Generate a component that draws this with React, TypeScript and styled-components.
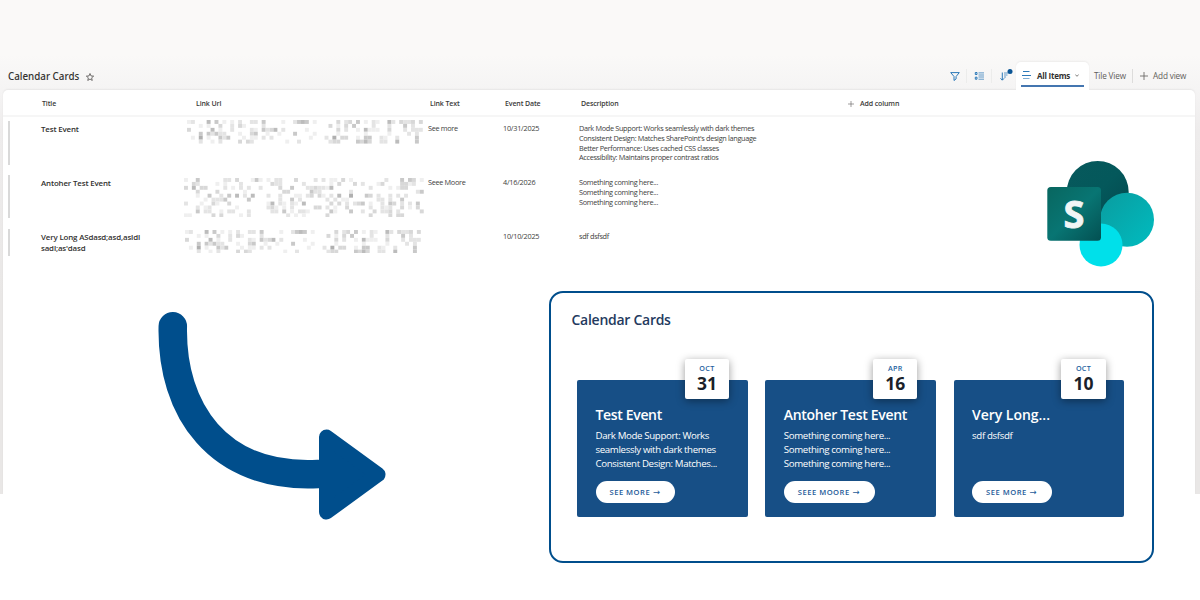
import React from "react";
import styled, { createGlobalStyle } from "styled-components";

const GlobalStyle = createGlobalStyle`
  body { margin: 0; background: #fff; font-family: "Open Sans", "Noto Sans", sans-serif; }
  *, *::before, *::after { box-sizing: border-box; }
`;

const Page = styled.main`
  position: relative;
  width: 1200px;
  height: 600px;
  overflow: hidden;
  background: #fff;
`;

const ListSite = styled.section`
  display: flex;
  flex-direction: column;
  height: 494px;
  padding: 62px 5px 0 3px;
  background: linear-gradient(#faf9f8 0, #faf9f8 55px, #f5f4f4 90px, #eeecec 130px, #e9e7e6 300px, #e9e7e6 100%);
`;

const CommandBar = styled.header`
  display: flex;
  align-items: center;
  height: 28px;
  padding-left: 5px;
  flex: none;
`;

const ListTitle = styled.h1`
  margin: 1px 0 0;
  font-family: "Noto Sans", sans-serif;
  font-size: 9.8px;
  line-height: 14px;
  font-weight: 500;
  color: #323130;
  letter-spacing: 0;
`;

const Star = styled.svg`
  width: 8px;
  height: 8px;
  margin: 2px auto 0 7px;
`;

const Tool = styled.span<{ $last?: boolean }>`
  display: flex;
  align-items: center;
  justify-content: center;
  width: 24.5px;
  height: 14px;
  padding-left: ${(p) => (p.$last ? 5 : 1)}px;
  border-right: 1px solid ${(p) => (p.$last ? "transparent" : "#ececeb")};
  svg { display: block; overflow: visible; flex: none; }
`;

const ActiveTab = styled.div`
  display: flex;
  align-items: center;
  position: relative;
  width: 73px;
  height: 28px;
  padding: 0 10px 2px 6px;
  border-radius: 5px 5px 0 0;
  background: #fff;
  box-shadow: 0 -1px 2px rgba(0, 0, 0, 0.05);
  &::after {
    content: "";
    position: absolute;
    left: 5px;
    right: 5px;
    bottom: 3px;
    height: 2px;
    background: #4476b0;
  }
`;

const TabLabel = styled.span`
  margin: 1px 0 0 6px;
  font-size: 8px;
  line-height: 12px;
  font-weight: 700;
  color: #323130;
  letter-spacing: -0.24px;
  flex: 1;
  white-space: nowrap;
`;

const ViewLink = styled.span<{ $left: number; $width: number }>`
  display: flex;
  align-items: center;
  gap: 5px;
  height: 14px;
  margin-bottom: 2px;
  padding-left: ${(p) => p.$left}px;
  width: ${(p) => p.$width}px;
  font-size: 8.2px;
  color: #5f5d5b;
  letter-spacing: -0.15px;
  white-space: nowrap;
  svg { margin-top: 2px; }
`;

const Divider = styled.i`
  width: 1px;
  height: 14px;
  background: #dddcdb;
`;

const ListSurface = styled.div`
  flex: 1;
  background: #fff;
  border-radius: 5px 5px 0 0;
  box-shadow: 0 -1px 2px rgba(0, 0, 0, 0.06);
`;

const HeadRow = styled.div`
  display: grid;
  grid-template-columns: 154px 234px 75px 76px 267px 1fr;
  align-items: center;
  height: 27px;
  padding: 2px 0 0 39px;
  border-bottom: 2px solid #f6f6f6;
  font-size: 7px;
  font-weight: 600;
  color: #3b3a39;
  letter-spacing: -0.12px;
`;

const AddColumn = styled.span`
  display: flex;
  align-items: center;
  gap: 6px;
`;

const Row = styled.div<{ $height: number; $bar: number }>`
  display: grid;
  grid-template-columns: 33px 143px 244px 75px 76px 1fr;
  height: ${(p) => p.$height}px;
  padding: 4px 0 0 5px;
  font-size: 7.3px;
  line-height: 9.6px;
  color: #403e3c;
  letter-spacing: -0.32px;
  &::before {
    content: "";
    width: 2px;
    height: ${(p) => p.$bar}px;
    background: #d9d9d9;
  }
`;

const RowTitle = styled.strong`
  padding-top: 3px;
  width: 112px;
  font-size: 7.9px;
  line-height: 11px;
  font-weight: 600;
  color: #323130;
  letter-spacing: -0.15px;
`;

const Cell = styled.span`
  padding-top: 3.4px;
  white-space: pre-line;
`;

const DateCell = styled(Cell)`
  letter-spacing: -0.25px;
`;

const Mosaic = styled.svg<{ $left: number; $top: number }>`
  display: block;
  margin: ${(p) => p.$top}px 0 0 ${(p) => p.$left}px;
`;

const Panel = styled.section`
  position: absolute;
  left: 549px;
  top: 291px;
  width: 605px;
  height: 272px;
  padding: 17px 20px 0 20.5px;
  border: 2px solid #004e8c;
  border-radius: 14px;
  background: #fff;
`;

const PanelTitle = styled.h2`
  margin: 0 0 49.5px;
  font-size: 14px;
  line-height: 20px;
  font-weight: 600;
  color: #243a5e;
  letter-spacing: -0.27px;
`;

const CardGrid = styled.div`
  display: grid;
  grid-template-columns: repeat(3, 170.7px);
  gap: 17.6px;
  padding-left: 5.5px;
`;

const Card = styled.article`
  position: relative;
  display: flex;
  flex-direction: column;
  align-items: flex-start;
  height: 137.5px;
  padding: 25px 18px 14px 18.5px;
  border-radius: 2px;
  background: #174f86;
  color: #fff;
`;

const DateBadge = styled.time`
  position: absolute;
  right: 18.5px;
  top: -20.5px;
  display: flex;
  flex-direction: column;
  align-items: center;
  width: 44.5px;
  height: 40px;
  padding-top: 5px;
  border-radius: 2px;
  background: #fff;
  box-shadow: 0 2px 9px rgba(0, 0, 0, 0.4);
`;

const Month = styled.span`
  font-size: 7.2px;
  line-height: 9px;
  font-weight: 600;
  color: #1e5fa0;
  letter-spacing: 0.3px;
`;

const Day = styled.span`
  font-size: 17.5px;
  line-height: 20px;
  font-weight: 700;
  color: #1b1f2a;
`;

const CardTitle = styled.h3<{ $tracking: number }>`
  margin: 0 0 4px;
  font-size: 14px;
  line-height: 20px;
  font-weight: 600;
  letter-spacing: ${(p) => p.$tracking}px;
  white-space: nowrap;
`;

const CardText = styled.p`
  margin: 0;
  font-size: 9.7px;
  line-height: 14px;
  letter-spacing: -0.36px;
  white-space: pre;
`;

const CardButton = styled.a`
  display: flex;
  align-items: center;
  gap: 2.5px;
  height: 22px;
  margin-top: auto;
  padding: 0 14.5px 0 14px;
  border-radius: 11px;
  background: #fff;
  color: #1e5b99;
  font-size: 7.6px;
  font-weight: 600;
  letter-spacing: 0.5px;
  white-space: nowrap;
`;

const ButtonArrow = styled.span`
  width: 8px;
  font-family: "DejaVu Sans", sans-serif;
  font-size: 8.5px;
  font-weight: 400;
  line-height: 10px;
  letter-spacing: 0;
`;

const Arrow = styled.svg`
  position: absolute;
  left: 150px;
  top: 305px;
`;

const Logo = styled.svg`
  position: absolute;
  left: 1040px;
  top: 155px;
`;

const narrowLink = [
  "0:1 1:2 5:5 7:4 9:1 11:1 13:2 16:2 17:2 19:4 24:1 27:2 28:4 29:5 30:4 32:1 38:3 40:2 41:3 43:4 45:1 47:2 48:1 51:5 52:2 54:3 55:2 56:2 57:3 59:3",
  "3:1 5:1 8:3 11:2 13:3 14:1 19:2 36:3 38:1 40:3 42:4 47:2 51:2 55:4 57:2",
  "0:3 6:5 8:1 11:2 16:2 17:1 19:4 20:2 21:3 22:5 24:2 30:1 38:3 40:2 43:1 45:5 46:1 47:1 48:1 51:3 55:2 57:2 58:2 59:2",
  "3:4 5:4 6:2 7:4 8:2 9:2 13:1 16:3 17:4 20:1 23:1 27:4 32:1 38:1 45:1 51:1 56:2 58:2",
  "1:1 3:6 5:1 8:4 9:2 10:4 14:1 16:1 17:1 19:2 21:2 31:1 35:2 37:6 39:3 40:3 43:1 45:4 46:4 49:2 50:1 53:2 58:4",
  "3:2 6:1 8:2 13:3 15:3 16:2 25:1 28:2 36:2 37:3 38:3 43:4 44:3 45:5 46:3 49:2 50:2 53:5 58:4",
];

const wideLink = [
  "0:1 3:4 10:2 11:2 13:3 17:1 18:4 19:1 21:1 23:2 24:2 28:3 33:2 35:2 37:1 38:1 40:3 42:1 51:2 55:4 57:4 58:3 60:1",
  "2:3 3:2 8:1 10:1 14:2 22:3 23:2 24:2 30:2 37:1 39:3 43:3 45:2 49:1 50:3 55:3 56:3 57:1 58:2",
  "0:3 2:5 4:3 5:3 10:2 12:1 14:2 16:2 19:2 24:3 27:4 31:2 32:2 33:3 34:2 35:2 36:1 37:5 47:2 52:1 54:1 55:3 56:3",
  "3:3 8:3 15:1 25:3 26:3 32:4 33:2 34:2 42:2 59:2 60:4",
  "3:1 6:4 9:2 11:4 13:5 15:2 17:5 21:2 24:2 28:1 29:1 31:2 32:3 34:3 35:1 37:2 39:5 42:6 46:4 47:3 49:2 52:2 54:2 56:2",
  "5:1 7:2 8:2 9:2 10:4 16:4 24:2 27:4 29:2 36:2 38:2 40:1 41:1 49:2 50:2 52:2 55:4",
  "0:2 4:1 7:3 8:1 11:3 21:1 22:5 24:2 25:1 27:2 28:1 30:5 37:3 39:3 41:2 43:2 44:3 45:4 47:1 50:2 52:4 53:3 55:2 57:2 59:4",
  "3:2 5:1 6:2 13:1 21:2 22:3 23:1 25:1 27:2 33:3 34:3 36:2 38:1 41:3 47:2 50:2 51:1 52:2 55:3 57:1 59:3",
  "3:4 5:2 6:2 9:1 11:2 12:2 16:2 22:2 23:2 25:4 27:1 29:2 30:2 31:1 37:4 38:1 42:4 45:2 48:3 50:2 51:2 52:3 54:2 60:3",
  "0:1 1:1 7:3 9:3 14:1 16:2 26:2 28:1 30:1 36:3 47:3 52:3 54:3 55:3",
];

const shades = ["#fff", "#efefef", "#e4e4e4", "#d8d8d8", "#c9c9c9", "#bcbcbc", "#b0b0b0"];
const CELL = 3.93;

function RedactedLink({ rows, left, top }: { rows: string[]; left: number; top: number }) {
  return (
    <Mosaic $left={left} $top={top} width={241} height={rows.length * CELL} aria-label="hidden link">
      {rows.flatMap((row, y) =>
        row.split(" ").map((entry) => {
          const [x, level] = entry.split(":").map(Number);
          return <rect key={`${x}-${y}`} x={x * CELL} y={y * CELL} width={CELL} height={CELL} fill={shades[level]} />;
        })
      )}
    </Mosaic>
  );
}

const items = [
  {
    title: "Test Event", link: narrowLink, left: 3, top: -1, text: "See more", date: "10/31/2025", height: 54, bar: 44,
    description: "Dark Mode Support: Works seamlessly with dark themes\nConsistent Design: Matches SharePoint's design language\nBetter Performance: Uses cached CSS classes\nAccessibility: Maintains proper contrast ratios",
  },
  {
    title: "Antoher Test Event", link: wideLink, left: 0, top: 3, text: "Seee Moore", date: "4/16/2026", height: 54, bar: 43,
    description: "Something coming here...\nSomething coming here...\nSomething coming here...",
  },
  {
    title: "Very Long ASdasd;asd,asldl sadl;as'dasd", link: narrowLink, left: 1, top: 0.7, text: "", date: "10/10/2025", height: 54, bar: 27,
    description: "sdf dsfsdf",
  },
];

const cards = [
  { month: "OCT", day: 31, title: "Test Event", tracking: -0.34, text: "Dark Mode Support: Works\nseamlessly with dark themes\nConsistent Design: Matches...", action: "SEE MORE" },
  { month: "APR", day: 16, title: "Antoher Test Event", tracking: -0.3, text: "Something coming here...\nSomething coming here...\nSomething coming here...", action: "SEEE MOORE" },
  { month: "OCT", day: 10, title: "Very Long...", tracking: -0.03, text: "sdf dsfsdf", action: "SEE MORE" },
];

const Plus = ({ size }: { size: number }) => (
  <svg width={size} height={size} viewBox="0 0 8 8" stroke="#5f5d5b" strokeWidth="0.8">
    <path d="M4 0v8M0 4h8" />
  </svg>
);

export default function App() {
  return (
    <Page>
      <GlobalStyle />
      <ListSite>
        <CommandBar>
          <ListTitle>Calendar Cards</ListTitle>
          <Star viewBox="0 0 16 16" fill="none" stroke="#484644" strokeWidth="1.5" strokeLinejoin="round">
            <path d="M8 1l2 4.900 5.300.400-4 3.400 1.200 5.200L8 12.100l-4.500 2.800 1.200-5.200-4-3.400 5.300-.4z" />
          </Star>
          <Tool>
            <svg width="10" height="9" viewBox="0 0 10 9" fill="none" stroke="#2b78b8" strokeWidth="1" strokeLinejoin="round">
              <path d="M.7.6h8.600L6.100 4.500v2.400L4 8.500v-4z" />
            </svg>
          </Tool>
          <Tool>
            <svg width="9" height="8" viewBox="0 0 9 8" fill="none" stroke="#2b78b8" strokeWidth="1">
              <path d="M3.500 .9H9M3.500 3H9M3.500 5H9M3.500 7.200H9" opacity=".75" />
              <path d="M.3.500h1.700v2H.300zM.300 5.200h1.700v2H.300z" />
            </svg>
          </Tool>
          <Tool $last>
            <svg width="12" height="10" viewBox="0 0 12 10" fill="none" stroke="#2b78b8" strokeWidth="1">
              <path d="M2.300 1.500v7.500M.500 7.300l1.800 1.900 1.800-1.900" />
              <path d="M4 2h4M4 4h3.500M4 6h2" opacity=".75" />
              <circle cx="10" cy="0.500" r="2.500" fill="#0b5595" stroke="none" />
            </svg>
          </Tool>
          <ActiveTab>
            <svg width="9" height="9" viewBox="0 0 9 9" fill="none" stroke="#2b78b8" strokeWidth="1">
              <path d="M1 .5h6.500M0 4.500h9" />
              <path d="M1 7.500h6.500" opacity=".6" />
            </svg>
            <TabLabel>All Items</TabLabel>
            <svg width="4" height="3" viewBox="0 0 4 3" fill="none" stroke="#605e5c" strokeWidth=".8">
              <path d="M.3.5L2 2.300 3.700.500" />
            </svg>
          </ActiveTab>
          <ViewLink $left={5} $width={43}>Tile View</ViewLink>
          <Divider />
          <ViewLink $left={7} $width={62}><Plus size={8} />Add view</ViewLink>
        </CommandBar>
        <ListSurface>
          <HeadRow>
            <span>Title</span>
            <span>Link Url</span>
            <span>Link Text</span>
            <span>Event Date</span>
            <span>Description</span>
            <AddColumn><Plus size={6} />Add column</AddColumn>
          </HeadRow>
          {items.map((item) => (
            <Row key={item.title} $height={item.height} $bar={item.bar}>
              <RowTitle>{item.title}</RowTitle>
              <RedactedLink rows={item.link} left={item.left} top={item.top} />
              <Cell>{item.text}</Cell>
              <DateCell>{item.date}</DateCell>
              <Cell>{item.description}</Cell>
            </Row>
          ))}
        </ListSurface>
      </ListSite>

      <Logo width="120" height="116" viewBox="0 0 120 116">
        <defs>
          <linearGradient id="dark" x1="0" y1="0" x2="1" y2="1">
            <stop offset="0" stopColor="#07595c" />
            <stop offset=".5" stopColor="#04585b" />
            <stop offset="1" stopColor="#03484d" />
          </linearGradient>
          <linearGradient id="mid" x1="0" y1="0" x2="1" y2="1">
            <stop offset="0" stopColor="#0a9c9f" />
            <stop offset="1" stopColor="#00bcc0" />
          </linearGradient>
          <linearGradient id="tile" x1="0" y1="0" x2="1" y2="1">
            <stop offset="0" stopColor="#08665f" />
            <stop offset=".5" stopColor="#087573" />
            <stop offset="1" stopColor="#035052" />
          </linearGradient>
        </defs>
        <circle cx="57.700" cy="37" r="31" fill="url(#dark)" />
        <circle cx="87" cy="64.700" r="27" fill="url(#mid)" />
        <circle cx="61" cy="90" r="21.500" fill="#00e0ea" />
        <rect x="7.300" y="32" width="53.700" height="53.700" rx="3.500" fill="url(#tile)" />
        <text x="34" y="72.500" textAnchor="middle" fontFamily="Open Sans" fontWeight="700" fontSize="38" fill="#f1f6f6" stroke="#f1f6f6" strokeWidth=".8">S</text>
      </Logo>

      <Arrow width="240" height="220" viewBox="0 0 240 220" fill="none" stroke="#004e8c">
        <path d="M22.800 21.300C21 105 68 174 168 169" strokeWidth="28.500" strokeLinecap="round" />
        <path d="M176.500 132L228 169.500 176.500 207z" fill="#004e8c" strokeWidth="15" strokeLinejoin="round" />
      </Arrow>

      <Panel>
        <PanelTitle>Calendar Cards</PanelTitle>
        <CardGrid>
          {cards.map((card) => (
            <Card key={card.title}>
              <DateBadge>
                <Month>{card.month}</Month>
                <Day>{card.day}</Day>
              </DateBadge>
              <CardTitle $tracking={card.tracking}>{card.title}</CardTitle>
              <CardText>{card.text}</CardText>
              <CardButton>
                {card.action}
                <ButtonArrow>→</ButtonArrow>
              </CardButton>
            </Card>
          ))}
        </CardGrid>
      </Panel>
    </Page>
  );
}
